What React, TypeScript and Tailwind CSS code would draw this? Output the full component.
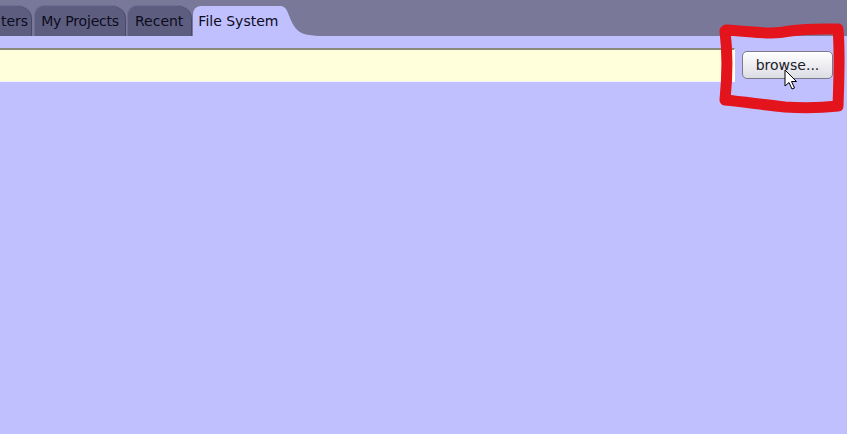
import React from "react";

const font = { fontFamily: '"DejaVu Sans", "Liberation Sans", sans-serif' };

function InactiveTab({ label, className }: { label: string; className?: string }) {
  return (
    <div
      className={`relative h-[31px] flex items-center bg-[#5d5d80] text-[#0c0c1c] text-[14px] rounded-tl-[10px] rounded-tr-[14px] border-t border-l border-[#6e6e94] shadow-[inset_-1px_0_0_#4a4a68] ${className ?? ""}`}
    >
      {label}
    </div>
  );
}

export default function App() {
  return (
    <div className="relative w-[847px] h-[434px] overflow-hidden bg-[#c0c0ff]" style={font}>
      {/* tab bar */}
      <div className="h-[36px] bg-[#7a7898] flex items-end">
        <InactiveTab label="ters" className="ml-[-12px] pl-[12px] pr-[4px] rounded-tl-none" />
        <InactiveTab label="My Projects" className="ml-[2px] pl-[6px] pr-[7px] tracking-[-0.2px]" />
        <InactiveTab label="Recent" className="ml-[1px] pl-[7px] pr-[9px]" />
        <div className="relative flex items-end ml-[1px]">
          <div className="h-[30px] flex items-center pl-[5px] pr-[1px] bg-[#c0c0ff] text-[#0c0c1c] text-[14px] rounded-tl-[8px]">
            File System
          </div>
          <svg width="44" height="30" viewBox="0 0 44 30" className="block">
            <path d="M0 0 L1 0 C5 0 7 2 9 7 C13 17 16 26 27 28.5 C34 29.6 39 30 44 30 L0 30 Z" fill="#c0c0ff" />
          </svg>
        </div>
      </div>

      {/* path row */}
      <div className="mt-[12px] flex items-center">
        <div className="w-[735px] h-[34px] bg-[#ffffdc] border-t-2 border-t-[#8a8a7a] border-b border-b-[#f4f4ff] border-r border-r-[#ffffff]" />
        <button
          className="ml-[7px] w-[91px] h-[28px] rounded-[5px] border border-[#7a7a88] bg-gradient-to-b from-[#ffffff] to-[#dcdce4] text-[14px] text-[#202028] flex items-center justify-center"
          style={font}
        >
          browse...
        </button>
      </div>

      {/* red annotation + cursor overlay */}
      <svg className="absolute left-0 top-0 pointer-events-none" width="847" height="434" viewBox="0 0 847 434">
        <path
          d="M726 30 C760 32 770 35 790 31 C810 28 825 29 838 29 C840 50 839 80 838 106 C820 108 800 108 785 107 C765 105 745 102 725 100 C727 80 728 55 725 31"
          fill="none"
          stroke="#e3141b"
          strokeWidth="11"
          strokeLinejoin="round"
          strokeLinecap="round"
        />
        <path
          d="M785 70 L785 86 L789 82.5 L792 89 L794.5 88 L791.5 81.5 L796.5 81.5 Z"
          fill="#ffffff"
          stroke="#000000"
          strokeWidth="1"
          strokeLinejoin="round"
        />
      </svg>
    </div>
  );
}
